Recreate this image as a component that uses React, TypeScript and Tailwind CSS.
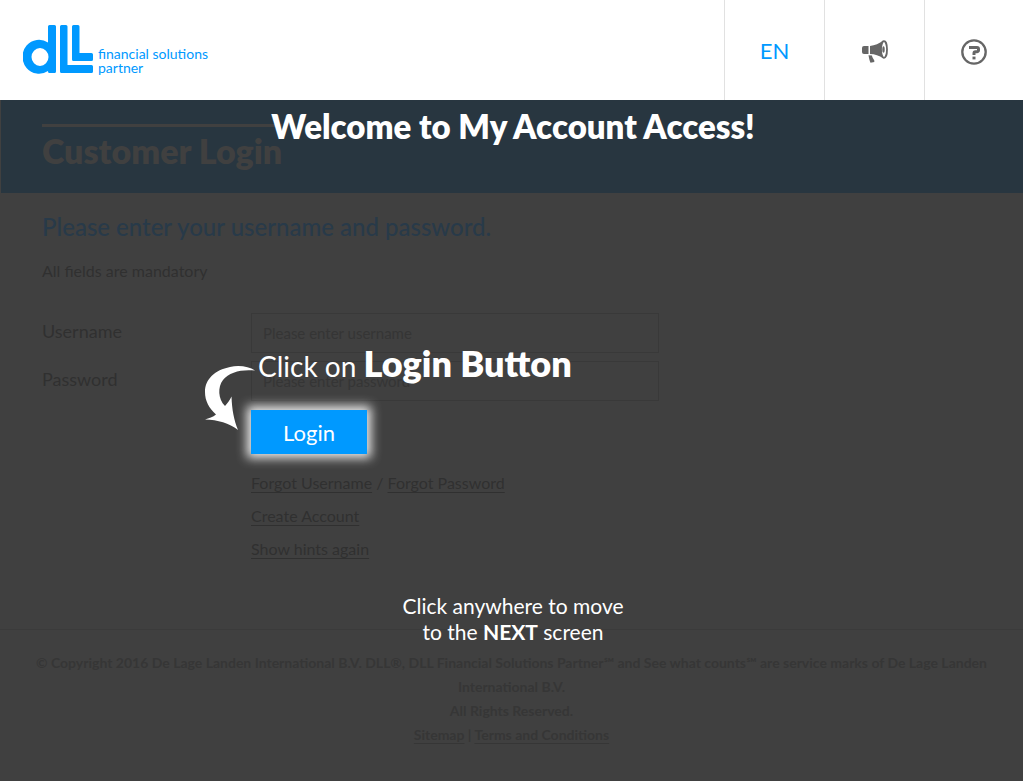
import React, { useState } from 'react';

const links = [
    { id: 'create', label: 'Create Account' },
    { id: 'hints', label: 'Show hints again' },
];

const Logo = () => (
    <a href="#home" aria-label="DLL home" className="flex items-end text-[#0099ff]">
        <svg width="70" height="50" viewBox="0 0 70 50" fill="currentColor" aria-hidden="true">
            <path
                fillRule="evenodd"
                d="M26.500 0h5a1.500 1.500 0 0 1 1.500 1.500v45a1.500 1.500 0 0 1-1.500 1.500h-5a1.500 1.500 0 0 1-1.500-1.500v-.5A16.500 17 0 1 1 25 17.500V1.500A1.500 1.500 0 0 1 26.500 0zM17 23a8.500 9 0 1 0 0 18a8.500 9 0 1 0 0-18z"
            />
            <path d="M38.500 0h4.500a1.500 1.500 0 0 1 1.500 1.500V40h24a1.500 1.500 0 0 1 1.500 1.500v5a1.500 1.500 0 0 1-1.500 1.500h-30a1.500 1.500 0 0 1-1.500-1.500v-45A1.500 1.500 0 0 1 38.500 0z" />
            <path d="M50.500 0h4.500a1.500 1.500 0 0 1 1.500 1.500V28h12a1.500 1.500 0 0 1 1.500 1.500v5a1.500 1.500 0 0 1-1.500 1.500h-18a1.500 1.500 0 0 1-1.500-1.500v-33A1.500 1.500 0 0 1 50.500 0z" />
        </svg>
        <span className="ml-[5px] text-[14px] leading-[14px]">
            financial solutions
            <br />
            partner
        </span>
    </a>
);

const MegaphoneIcon = () => (
    <svg width="26" height="24" viewBox="0 0 26 24" fill="#666666" aria-hidden="true">
        <path d="M2 6h4.500v8H2a2 2 0 0 1-2-2V8a2 2 0 0 1 2-2z" />
        <path d="M8 6c5-.5 9-2.500 13.500-5.500v18C17 15.500 13 14 8 14z" />
        <path d="M6.500 15.200l3.500.3c0 2 1.500 3 2.300 5v1.500L8.500 22.800C7.500 20.500 7 18 6.500 15.200z" />
        <ellipse cx="22" cy="9.500" rx="3" ry="8.300" fill="#ffffff" stroke="#666666" strokeWidth="1.800" />
        <ellipse cx="21.500" cy="9.500" rx="1.200" ry="3.200" />
    </svg>
);

const HelpIcon = () => (
    <svg width="26" height="26" viewBox="0 0 26 26" fill="none" stroke="#666666" aria-hidden="true">
        <circle cx="13" cy="13" r="11.700" strokeWidth="2.300" />
        <path d="M8 8.500h8a1.500 1.500 0 0 1 1.500 1.500v1.200a1.500 1.500 0 0 1-1.500 1.500h-1.500a1.500 1.500 0 0 0-1.500 1.500v1.800" strokeWidth="3" />
        <path d="M11.500 19h3" strokeWidth="2.800" />
    </svg>
);

const ArrowIcon = () => (
    <svg width="50" height="66" viewBox="0 0 50 66" fill="#ffffff" aria-hidden="true">
        <path d="M50 5.500C44 1.500 34 0 25 2C10 5 0 14 0 27C0 36 4 43 11 49.500C8 52 4 53 0 54.500C13 55 24 58 33 65C29 55 27 45 26.500 31.500C25 35 22.500 38 20 41C13 34 12.500 22 18 15C24 7 37 4 50 5.500z" />
    </svg>
);

const App = () => {
    const [username, setUsername] = useState('');
    const [password, setPassword] = useState('');
    const [showHints, setShowHints] = useState(true);

    const handleSubmit = (e: React.FormEvent) => {
        e.preventDefault();
    };

    const inputClass =
        'h-10 w-[408px] border border-[#393939] bg-transparent px-[11px] pb-px text-[15px] text-[#333333] placeholder:text-[#353535] outline-none';

    return (
        <div className="min-h-screen bg-[#404040] font-['Lato',sans-serif] text-[#303030]">
            <header className="flex h-[100px] items-stretch justify-between bg-white">
                <div className="flex items-center pl-[23px]">
                    <Logo />
                </div>
                <nav className="flex">
                    <button className="w-[100px] border-l border-[#e1e1e1] text-[22px] text-[#0099ff]">EN</button>
                    <button aria-label="News" className="flex w-[100px] items-center justify-center border-l border-[#e1e1e1] pt-1">
                        <MegaphoneIcon />
                    </button>
                    <button aria-label="Help" className="flex w-[99px] items-center justify-center border-l border-[#e1e1e1] pt-1">
                        <HelpIcon />
                    </button>
                </nav>
            </header>

            <div className="relative" onClick={() => setShowHints(false)}>
                <div className="flex h-[93px] items-start border-l border-[#404040] bg-[#283640] pt-6 pl-[41px]">
                    <h1 className="border-t-[3px] border-[#404040] pt-1 text-[34px] leading-10 font-extrabold text-[#404040]">
                        Customer Login
                    </h1>
                </div>

                <main className="px-[42px] pt-[18px] pb-16">
                    <h2 className="text-[24px] leading-8 font-medium text-[#283a49]">Please enter your username and password.</h2>
                    <p className="mt-4 text-[16px] leading-6">All fields are mandatory</p>

                    <form onSubmit={handleSubmit} className="mt-[30px] flex flex-col gap-2">
                        <div className="flex h-10 items-center">
                            <label htmlFor="username" className="w-[209px] pb-1 text-[18px]">
                                Username
                            </label>
                            <input
                                id="username"
                                className={inputClass}
                                placeholder="Please enter username"
                                value={username}
                                onChange={(e) => setUsername(e.target.value)}
                            />
                        </div>
                        <div className="flex h-10 items-center">
                            <label htmlFor="password" className="w-[209px] pb-1 text-[18px]">
                                Password
                            </label>
                            <input
                                id="password"
                                type="password"
                                className={inputClass}
                                placeholder="Please enter password"
                                value={password}
                                onChange={(e) => setPassword(e.target.value)}
                            />
                        </div>
                        <div className="relative mt-px ml-[209px] self-start">
                            <button
                                type="submit"
                                className="h-11 w-[116px] bg-[#0099ff] text-[22px] text-white shadow-[0_0_10px_4px_rgba(255,255,255,0.9)]"
                            >
                                Login
                            </button>
                            {showHints && (
                                <div className="pointer-events-none absolute bottom-[23px] -left-[46px] flex items-end text-white">
                                    <ArrowIcon />
                                    <p className="ml-[3px] pb-[45px] text-[28px] leading-10 whitespace-nowrap">
                                        Click on <strong className="text-[36px] font-extrabold">Login Button</strong>
                                    </p>
                                </div>
                            )}
                        </div>
                    </form>

                    <div className="mt-3 ml-[209px] text-[16px] leading-[33px]">
                        <p>
                            <a href="#forgot-username" className="underline underline-offset-3">Forgot Username</a>
                            {' / '}
                            <a href="#forgot-password" className="underline underline-offset-3">Forgot Password</a>
                        </p>
                        {links.map((link) => (
                            <p key={link.id}>
                                <a href={`#${link.id}`} className="underline underline-offset-3">{link.label}</a>
                            </p>
                        ))}
                    </div>
                </main>

                <footer className="border-t border-[#3b3b3b] px-4 pt-[21px] pb-8 text-center text-[14px] leading-6 font-bold text-[#363636]">
                    <p>
                        © Copyright 2016 De Lage Landen International B.V. DLL®, DLL Financial Solutions Partner℠ and See what
                        counts℠ are service marks of De Lage Landen International B.V.
                    </p>
                    <p>All Rights Reserved.</p>
                    <p>
                        <a href="#sitemap" className="underline underline-offset-3">Sitemap</a>
                        {' | '}
                        <a href="#terms" className="underline underline-offset-3">Terms and Conditions</a>
                    </p>
                </footer>

                {showHints && (
                    <div className="pointer-events-none absolute inset-0 flex flex-col items-center justify-between pt-1.5 pb-[134px] pl-[3px] text-center text-white">
                        <p className="text-[33px] leading-10 font-extrabold">Welcome to My Account Access!</p>
                        <p className="text-[21px] leading-[26px]">
                            Click anywhere to move
                            <br />
                            to the <strong>NEXT</strong> screen
                        </p>
                    </div>
                )}
            </div>
        </div>
    );
};

export default App;
